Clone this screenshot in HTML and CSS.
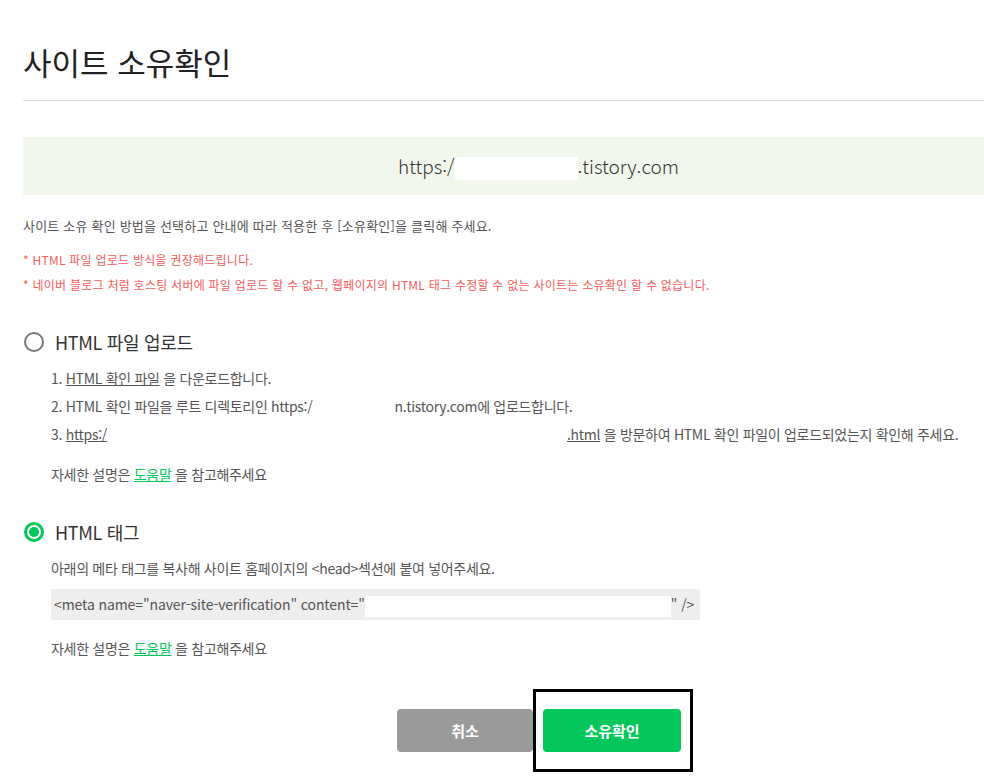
FILE: index.html
```html
<!DOCTYPE html>
<html lang="ko">
<head>
  <meta charset="UTF-8">
  <meta name="viewport" content="width=device-width, initial-scale=1.0">
  <title>사이트 소유확인</title>
  <link rel="stylesheet" href="styles.css">
</head>
<body>
  <div class="page">
    <h1 class="title">사이트 소유확인</h1>

    <div class="site-box">https:/<span class="mask site-mask"></span>.tistory.com</div>

    <p class="desc">사이트 소유 확인 방법을 선택하고 안내에 따라 적용한 후 [소유확인]을 클릭해 주세요.</p>
    <div class="notes">
      <p>* HTML 파일 업로드 방식을 권장해드립니다.</p>
      <p>* 네이버 블로그 처럼 호스팅 서버에 파일 업로드 할 수 없고, 웹페이지의 HTML 태그 수정할 수 없는 사이트는 소유확인 할 수 없습니다.</p>
    </div>

    <div class="option">
      <span class="radio"></span>
      <span class="option-label">HTML 파일 업로드</span>
    </div>
    <div class="option-body">
      <ol class="steps">
        <li>1. <a href="#" class="plain-link">HTML 확인 파일</a> 을 다운로드합니다.</li>
        <li>2. HTML 확인 파일을 루트 디렉토리인 https:/<span class="mask gap-2"></span>n.tistory.com에 업로드합니다.</li>
        <li>3. <a href="#" class="plain-link">https:/</a><span class="mask gap-3"></span><a href="#" class="plain-link">.html</a> 을 방문하여 HTML 확인 파일이 업로드되었는지 확인해 주세요.</li>
      </ol>
      <p class="help">자세한 설명은 <a href="#" class="green-link">도움말</a> 을 참고해주세요</p>
    </div>

    <div class="option option-second">
      <span class="radio checked"></span>
      <span class="option-label">HTML 태그</span>
    </div>
    <div class="option-body">
      <p class="line">아래의 메타 태그를 복사해 사이트 홈페이지의 &lt;head&gt;섹션에 붙여 넣어주세요.</p>
      <div class="code">&lt;meta name="naver-site-verification" content="<span class="code-mask"></span>" /&gt;</div>
      <p class="help help-second">자세한 설명은 <a href="#" class="green-link">도움말</a> 을 참고해주세요</p>
    </div>

    <div class="actions">
      <button class="btn btn-cancel">취소</button>
      <button class="btn btn-confirm">소유확인</button>
    </div>
  </div>
</body>
</html>
```

FILE: styles.css
```css
body {
  margin: 0;
  background: #fff;
  font-family: "Noto Sans CJK KR", "Noto Sans", sans-serif;
  color: #555;
}
.page {
  padding: 0 0 30px 23px;
}
p {
  margin: 0;
}
.title {
  margin: 0;
  padding: 40px 0 16px;
  line-height: 44px;
  font-size: 31px;
  font-weight: 400;
  color: #222;
  border-bottom: 1px solid #ddd;
}
.site-box {
  margin-top: 36px;
  height: 58px;
  line-height: 58px;
  background: #f1f7ea;
  text-align: center;
  font-size: 19px;
  font-weight: 300;
  color: #333;
  padding-left: 70px;
}
.mask {
  display: inline-block;
}
.site-mask {
  width: 123px;
  height: 23px;
  vertical-align: middle;
  background: #fff;
}
.desc {
  margin-top: 21px;
  line-height: 20px;
  font-size: 13px;
  letter-spacing: 0.2px;
}
.notes {
  margin-top: 14px;
  font-size: 12px;
  letter-spacing: 0.25px;
  color: #f75b5b;
}
.notes p {
  line-height: 20px;
}
.notes p + p {
  margin-top: 5px;
}
.option {
  display: flex;
  align-items: center;
  gap: 11px;
  height: 30px;
  margin-top: 32px;
}
.option-second {
  margin-top: 29px;
}
.radio {
  width: 16px;
  height: 16px;
  border: 2px solid #777;
  border-radius: 50%;
  margin-left: 1px;
  position: relative;
}
.radio.checked {
  border: 3px solid #03c75a;
  width: 14px;
  height: 14px;
}
.radio.checked::after {
  content: "";
  position: absolute;
  inset: 2px;
  border-radius: 50%;
  background: #03c75a;
}
.option-label {
  font-size: 18px;
  color: #333;
  letter-spacing: -0.3px;
}
.option-body {
  padding-left: 28px;
  font-size: 14px;
  letter-spacing: -0.3px;
}
.steps {
  list-style: none;
  margin: 7px 0 0;
  padding: 0;
}
.steps li {
  line-height: 28px;
}
.plain-link {
  color: #555;
  text-decoration: underline;
}
.gap-2 {
  width: 82px;
}
.gap-3 {
  width: 460px;
}
.help {
  margin-top: 12px;
  line-height: 28px;
}
.help-second {
  margin-top: 14px;
}
.green-link {
  color: #03c75a;
  text-decoration: underline;
}
.line {
  margin-top: 7px;
  line-height: 28px;
}
.code {
  margin-top: 7px;
  width: 649px;
  height: 31px;
  line-height: 31px;
  background: #eee;
  box-sizing: border-box;
  padding-left: 3px;
  letter-spacing: -0.1px;
  white-space: nowrap;
}
.code-mask {
  display: inline-block;
  width: 306px;
  height: 21px;
  vertical-align: middle;
  background: #fff;
}
.actions {
  display: flex;
  gap: 10px;
  margin-top: 47px;
  padding-left: 374px;
}
.btn {
  height: 43px;
  border: none;
  border-radius: 4px;
  font-family: inherit;
  font-size: 15px;
  font-weight: bold;
  color: #fff;
  cursor: pointer;
}
.btn-cancel {
  width: 136px;
  background: #9a9a9a;
}
.btn-confirm {
  width: 138px;
  background: #03c75a;
  position: relative;
}
.btn-confirm::after {
  content: "";
  position: absolute;
  top: -20px;
  bottom: -20px;
  left: -10px;
  right: -12px;
  border: 3px solid #000;
}
```
